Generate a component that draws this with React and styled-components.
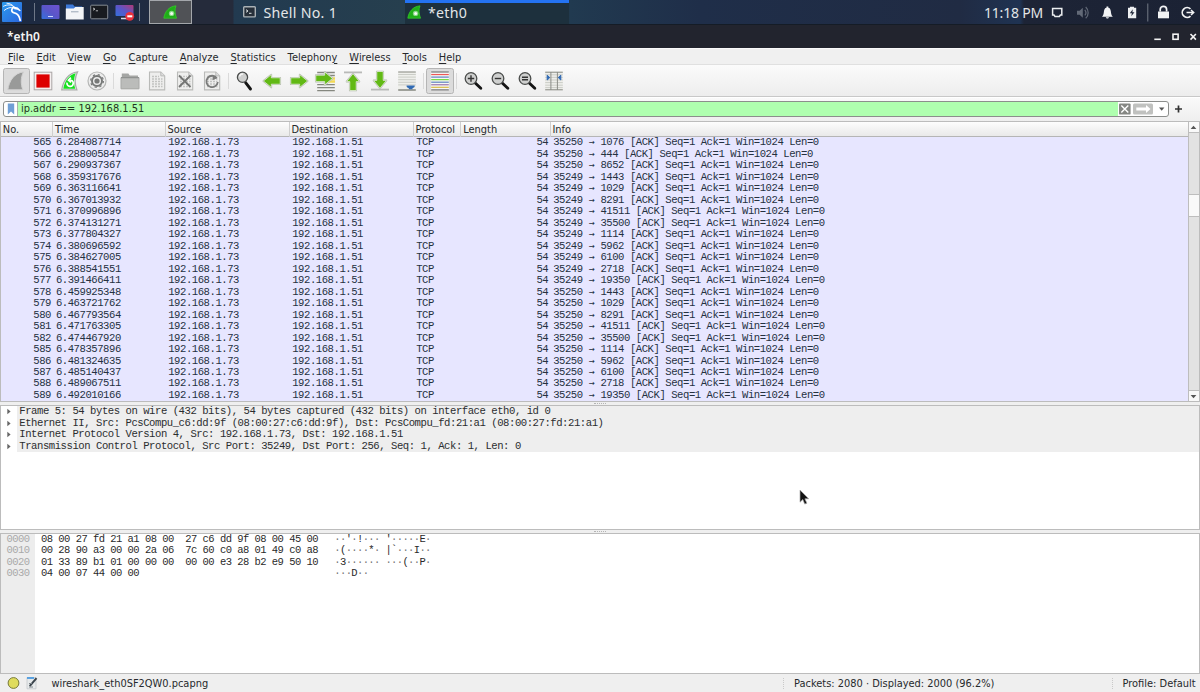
import React from "react";
import styled, { createGlobalStyle } from "styled-components";

const Global = createGlobalStyle`
  html, body { margin: 0; padding: 0; overflow: hidden; }
  body { width: 1200px; height: 692px; font-family: "DejaVu Sans", sans-serif; font-size: 9.85px; color: #26292c; }
  * { box-sizing: border-box; }
  svg { display: block; flex: none; }
`;

const Desktop = styled.div`
  width: 1200px; height: 692px; display: flex; flex-direction: column;
  background: #efefef; overflow: hidden; position: relative;
`;

/* ---------- desktop panel ---------- */
const Panel = styled.div`
  height: 25px; flex: none; display: flex; align-items: center; color: #e3e6e8;
  background: linear-gradient(90deg, #1d2a42 0, #1f2b42 140px, #252b3b 180px, #252b3b 233px, #223a50 234px, #263f4e 405px, #203845 568px, #213a50 570px, #1f2e49 700px, #202b43 960px, #1f3352 1020px, #1d2436 1024px, #1b2234 100%);
  border-bottom: 1px solid #151c26;
`;
const Launchers = styled.div`
  display: flex; align-items: center; width: 234px; height: 24px; padding-left: 2px;
`;
const LauncherGroup = styled.div`
  display: flex; align-items: center; gap: 5.2px; margin: 0 3px 0 6px;
`;
const PanelSep = styled.div`
  width: 1px; height: 18px; background: #6e7787; margin-left: ${p => p.$l || 0}px;
`;
const Pager = styled.div`
  width: 43px; height: 24px; background: #505256; border: 1px solid #a4a7ab; margin-left: 9px;
  display: flex; align-items: center; justify-content: center;
`;
const Task = styled.div`
  width: ${p => p.$w}px; height: 24px; padding-left: ${p => p.$pad}px;
  display: flex; align-items: center; gap: ${p => p.$gap}px; white-space: nowrap;
  font-family: "Noto Sans", sans-serif; font-size: 14.2px; letter-spacing: .27px;
  ${p => p.$active && "background: #1d303d; box-shadow: inset 0 3px 0 #2473f2;"}
`;
const Tray = styled.div`
  margin-left: auto; display: flex; align-items: center; height: 24px;
`;
const Clock = styled.span`
  font-family: "Noto Sans", sans-serif; font-size: 14px; margin-right: 8px; white-space: nowrap; letter-spacing: -.2px;
`;

/* ---------- window chrome ---------- */
const TitleBar = styled.div`
  height: 23px; flex: none; display: flex; align-items: center; justify-content: space-between;
  padding: 0 3px 0 7px; background: #22242e; color: #f3f3f3;
  font: 600 12px "Noto Sans", sans-serif;
`;
const MenuBar = styled.div`
  height: 17px; flex: none; display: flex; align-items: center; gap: 12px; padding: 1px 0 0 8px;
  background: #f0f0f0; border-top: 1px solid #fafafa; border-bottom: 1px solid #e0e0e0;
`;
const MenuItem = styled.span`
  white-space: nowrap;
  u { text-underline-offset: 1.5px; text-decoration-thickness: 1px; }
`;
const ToolBar = styled.div`
  height: 32px; flex: none; display: flex; align-items: center; padding-left: 2.5px;
  background: linear-gradient(#fbfbfb, #ededed); border-bottom: 1px solid #c8c8c8;
`;
const ToolButton = styled.div`
  width: 27.15px; height: 26px; display: flex; align-items: center; justify-content: center;
  border-radius: 2.5px; border: 1px solid ${p => (p.$on ? "#b5b5b5" : "transparent")};
  background: ${p => (p.$on ? "#dcdcdc" : "transparent")};
`;
const ToolSep = styled.div`
  width: 5.6px; height: 16px; display: flex; justify-content: center;
  &::after { content: ""; width: 1px; background: #dadada; }
`;
const FilterBar = styled.div`
  height: 24px; flex: none; display: flex; align-items: center; padding: 0 0 1px 3px;
  background: linear-gradient(#fafafa, #eeeeee); border-top: 1px solid #fff;
`;
const FilterField = styled.div`
  width: 1166px; height: 16px; display: flex; align-items: center; background: #fff;
  border: 1px solid #8c8e8c; border-radius: 3px; overflow: hidden;
`;
const Bookmark = styled.div`
  width: 14px; height: 14px; display: flex; align-items: center; justify-content: center; border-right: 1px solid #aab3aa;
`;
const FilterText = styled.div`
  flex: 1; height: 14px; line-height: 14px; background: #afffaf; padding-left: 3px; color: #1f3320;
`;
const FilterTools = styled.div`
  width: 50px; height: 14px; display: flex; align-items: center; padding-left: 1px;
`;

/* ---------- panes ---------- */
const Pane = styled.div`
  height: ${p => p.$h}px; flex: none; background: #fff; overflow: hidden; display: flex;
  border: 1px solid #bcbcbc;
`;
const Splitter = styled.div`
  height: 3px; flex: none; display: flex; align-items: center; justify-content: center;
  &::after { content: ""; width: 12px; border-top: 1px dotted #b4b4b4; }
`;
const Mono = styled.div`
  font-family: "Liberation Mono", monospace;
  white-space: pre;
`;
const List = styled.div`flex: 1; overflow: hidden; background: #e7e6ff;`;
const columns = "52.3px 112.3px 124px 124px 47.8px 89.2px 1fr";
const HeaderRow = styled.div`
  display: grid; grid-template-columns: ${columns}; height: 15.3px; line-height: 15px;
  background: linear-gradient(#fdfdfd, #e9e9e9); border-bottom: 1px solid #b5b5b5;
`;
const HeaderCell = styled.div`
  padding-left: 1.8px; border-right: 1px solid #cfcfcf;
  &:last-child { border-right: 0; }
`;
const PacketRow = styled(Mono)`
  display: grid; grid-template-columns: ${columns}; height: 11.49px; line-height: 11.49px;
  font-size: 10.6px; letter-spacing: -.457px; color: #25313f;
`;
const Cell = styled.span`
  padding: 0 ${p => (p.$right ? 2.3 : 0)}px 0 ${p => (p.$right ? 0 : 2.6)}px;
  text-align: ${p => (p.$right ? "right" : "left")};
`;
const ArrowGlyph = styled.span`
  display: inline-block; width: 5.9px; height: 11px; line-height: 10.5px; vertical-align: top;
  font-family: "DejaVu Sans Mono", monospace; font-size: 10px; letter-spacing: 0;
`;
const Scroll = styled.div`
  width: 11.5px; background: #e2e2e2; border-left: 1px solid #bdbdbd; display: flex; flex-direction: column;
`;
const ScrollPart = styled.div`
  height: ${p => p.$h}px; background: #f9f9f9; margin-top: ${p => p.$mt || 0};
  border: solid #bdbdbd; border-width: ${p => p.$bw || "0 0 1px"};
  display: flex; align-items: center; justify-content: center;
`;
const Tree = styled.div`flex: 1;`;
const TreeRow = styled(Mono)`
  height: 11.5px; line-height: 11.5px; display: flex; align-items: center;
  font-size: 10.6px; letter-spacing: -.457px; color: #2b2d2f;
`;
const Expander = styled.div`width: 16px; height: 100%; padding-left: 5px; display: flex; align-items: center;`;
const TreeText = styled.div`flex: 1; height: 100%; background: #eeeeee; padding-left: 2.3px;`;
const Offsets = styled(Mono)`
  width: 34px; background: #ededed; color: #a9a9a9; padding-left: 5.5px;
  font-size: 10.5px; line-height: 11.4px; letter-spacing: -.53px;
`;
const Bytes = styled(Mono)`
  padding-left: 6px; font-size: 10.5px; line-height: 11.4px; letter-spacing: -.53px; color: #2a2a2a;
`;
const Ascii = styled.span`
  margin-left: -1px; letter-spacing: -.63px;
  i { font-style: normal; color: #777; }
`;
const StatusBar = styled.div`
  height: 19px; flex: none; display: flex; align-items: center; padding-left: 7px; background: #efefef; padding-bottom: .5px;
`;
const StatusFile = styled.span`margin-left: 12.5px; flex: 1;`;
const StatusCell = styled.span`
  width: ${p => p.$w}px; border-left: 1px dotted #c9c9c9; padding-left: 10px; white-space: nowrap;
`;
const Pointer = styled.div`position: absolute; left: 799px; top: 489px;`;

/* ---------- icons ---------- */
const Ico = ({ w = 24, h = 24, children }) => (
  <svg width={w} height={h} viewBox={`0 0 ${w} ${h}`} fill="none">{children}</svg>
);

const KaliLogo = () => (
  <Ico w={20} h={20}>
    <defs><linearGradient id="kl" x1="0" y1="0" x2="1" y2="1"><stop stopColor="#2c9bee" /><stop offset="1" stopColor="#2b65dd" /></linearGradient></defs>
    <rect width="20" height="20" rx="1" fill="url(#kl)" />
    <path d="M1.2 4.4C5.5 2.2 9 2.6 12.3 5M2 8.6C5 6 8.6 5 12 5.6M4.5 1.2C8 1.4 10.5 2.8 12.3 5" stroke="#e9f4ff" strokeWidth="1" />
    <path d="M12 5.2C9 6.4 8.8 10 12.4 10.8C16.2 11.5 17.6 14 18.4 19" stroke="#fff" strokeWidth="1.7" />
    <path d="M11.5 4.6L15.8 5.4L18.8 8.4L18 9.3L15.4 7.8L12.3 7.2z" fill="#fff" />
  </Ico>
);
const Screen = ({ rec }) => (
  <Ico w={rec ? 21 : 19} h={18}>
    <defs><linearGradient id={rec ? "scr" : "scd"} x1="0" y1="1" x2="1" y2="0"><stop stopColor="#3470dc" /><stop offset=".5" stopColor="#5b55c8" /><stop offset="1" stopColor={rec ? "#b43a74" : "#6d53cf"} /></linearGradient></defs>
    <rect x=".5" y="2" width="18" height={rec ? 11 : 14} rx="1" fill={rec ? "url(#scr)" : "url(#scd)"} />
    {!rec && <path d="M7 13.5h5" stroke="#cfd9ff" />}
    {rec && <><path d="M6 15.5h6" stroke="#d8dce8" strokeWidth="1.5" /><circle cx="14.7" cy="13.3" r="4.4" fill="#e8303a" /><rect x="12.3" y="12.3" width="5" height="2" fill="#fff" /></>}
  </Ico>
);
const Files = () => (
  <Ico w={20} h={18}>
    <path d="M1 1.5h7l1.5 2H17V8H1z" fill="#3c78d8" /><path d="M.8 5.5h8l1.5-1.5h8.4V16.5H.8z" fill="#f2f4f7" /><path d="M6 8.8h7.5" stroke="#99a5b5" />
  </Ico>
);
const Terminal = ({ small }) => small ? (
  <Ico w={13} h={12}><rect x=".7" y=".7" width="11.6" height="10.2" rx=".8" fill="#27303a" stroke="#aab1b5" strokeWidth="1.4" /><path d="M3 3.7l2 1.3-2 1.3M6 7.3h2.5" stroke="#dfe4e5" /></Ico>
) : (
  <Ico w={19} h={16}><rect x=".7" y="1.2" width="17" height="13.6" rx=".8" fill="#181b20" stroke="#858b91" strokeWidth="1" /><path d="M3 4l2 1.1L3 6.2M5.8 6.8h2.2" stroke="#ddd" strokeWidth=".8" /></Ico>
);
const GreenFin = () => (
  <Ico w={15} h={14}>
    <path d="M.8 13.2C1.8 6.5 6 1.5 13 .8C11.5 4.5 11.8 9 13.6 13.2z" fill="#1fae18" stroke="#35d22a" strokeWidth=".7" />
    <circle cx="8.6" cy="8.4" r="2.7" fill="#89d886" /><circle cx="8.6" cy="8.4" r="1.5" fill="#f3fbf2" />
  </Ico>
);
const TrayIcons = () => (
  <Ico w={149} h={24}>
    <path d="M1.6 8.5h9.2v6.5h-1.4l-1 1.5H4l-1-1.5H1.6z" stroke="#eceef0" strokeWidth="1.5" />
    <g><path d="M26 10.7h2.6l3.2-3v10l-3.2-3H26z" fill="#626977" /><path d="M33.8 9.8c1.4 1.7 1.4 4 0 5.6M34.7 7c3.3 3 3.3 8.4 0 11.2" stroke="#626977" strokeWidth="1.2" /></g>
    <path d="M51 16.7c1.7-1.7 1.7-3.7 2-5.8.3-2.2 1.6-3.4 3.4-3.4s3.1 1.2 3.4 3.4c.3 2.1.3 4.1 2 5.8zM54.8 17.3h3.2c-.4 1.6-2.8 1.6-3.2 0zM55.5 6.6h1.8v2h-1.8z" fill="#f2f3f4" />
    <path d="M77 7.7h2v-1h4v1h2.2V18.3H77z" fill="#eef0f2" /><path d="M81.8 9.3l-3 4h2.1l-.7 3 3.3-4h-2.1z" fill="#1e2638" />
    <path d="M96.8 3.5v18" stroke="#747b87" />
    <path d="M107 11.5h11v6.8h-11z" fill="#f2f3f4" /><path d="M109.2 11.5V9.4c0-4 6.4-4 6.4 0v2.1" stroke="#f2f3f4" strokeWidth="1.7" />
    <path d="M139.5 8.9A4.9 4.9 0 1 0 139.5 16.1" stroke="#f2f3f4" strokeWidth="1.7" /><path d="M135.5 12.5h6.5M140 10l2.7 2.5L140 15" stroke="#f2f3f4" strokeWidth="1.5" />
  </Ico>
);
const WindowButtons = () => (
  <Ico w={44} h={16}>
    <path d="M1.3 10.3h6.5" stroke="#f3f3f3" strokeWidth="1.6" /><rect x="20" y="5.2" width="5.1" height="5.1" stroke="#f3f3f3" strokeWidth="1.6" /><path d="M37.5 5l5.4 5.6M42.9 5l-5.4 5.6" stroke="#f3f3f3" strokeWidth="1.6" />
  </Ico>
);

const finPath = "M3.8 20.8C5 11.8 10.5 3.8 19.5 2.9C16.6 8.5 16.7 15 18.8 20.8z";
const arrowPath = "M3.4 12L11.3 5.6v3.2h8.9v6.4h-8.9v3.2z";
const Arrow = ({ rot = 0, x = 0, y = 0 }) => (
  <g transform={`translate(${x} ${y}) rotate(${rot} 12 12)`} strokeLinejoin="round">
    <path d={arrowPath} fill="#f4f6f1" stroke="#b4b6b1" strokeWidth="1.7" />
    <path d={arrowPath} fill="#62b915" stroke="#eef4e6" strokeWidth=".7" />
  </g>
);
const Lines = ({ x1 = 3.2, x2 = 20.8, ys, c = "#85877f", w = 1 }) => <path d={ys.map(y => `M${x1} ${y}H${x2}`).join("")} stroke={c} strokeWidth={w} />;
const Lens = ({ children, plain }) => (
  <Ico>
    <path d={plain ? "M13.6 13.6L18.5 20" : "M14.2 14L19.8 19.3"} stroke="#151515" strokeWidth="2.9" strokeLinecap="round" />
    <circle cx={plain ? 10.5 : 10} cy={plain ? 8.3 : 9.5} r={plain ? 5.1 : 5.8} fill="#cfd0cf" stroke="#4b4d4c" strokeWidth="1.3" />
    {plain ? <path d="M7.5 7.5c.6-2 2-2.6 3.6-2.4" stroke="#f5f5f5" strokeWidth="1.5" /> : <path d={children} stroke="#343434" strokeWidth="1.4" />}
  </Ico>
);
const Doc = ({ children }) => (
  <Ico>
    <path d="M4.5 3h11.3l3.9 3.9v14H4.5z" fill="#eeeeed" stroke="#b9bab8" strokeWidth="1.1" />
    <path d="M15.8 3v3.9h3.9" fill="#ddd" stroke="#b9bab8" />
    <path d="M7 7.5h7M7 10h10.5M7 12.5h10.5M7 15h10.5M7 17.5h10.5" stroke="#c2c3c1" strokeWidth="1.3" strokeDasharray="2 1" />
    {children}
  </Ico>
);

const tools = {
  start: <Ico><path d={finPath} fill="#999a99" stroke="#d2d2d2" strokeWidth="1" /></Ico>,
  stop: <Ico><rect x="3.2" y="3.2" width="17.6" height="17.6" fill="#f5efef" stroke="#aaa6a6" /><rect x="5.4" y="5.4" width="13.2" height="13.2" fill="#dd0000" /></Ico>,
  restart: <Ico><path d={finPath} fill="#f2f7f2" stroke="#a9aca9" strokeWidth="1.3" /><path d="M5.3 19.8C6.5 12.3 10.8 5.8 17.8 4.2C15.5 9 15.7 15 17.3 19.8z" fill="#17df20" /><path d="M9 13.6c-.6 4.7 5.7 5.2 6.2.9.2-2.6-1.4-3.4-3-3.2M12.9 8.6l-2.4 2.5 2.6 2.2" stroke="#fff" strokeWidth="1.7" /></Ico>,
  options: <Ico><circle cx="12" cy="12" r="9" fill="#ededed" stroke="#b5b6b5" strokeWidth="1.2" /><circle cx="12" cy="12" r="5" stroke="#777978" strokeWidth="2" /><circle cx="12" cy="12" r="6.4" stroke="#777978" strokeWidth="1.2" strokeDasharray="2.2 2.83" /><circle cx="12" cy="12" r="2.6" fill="#777978" /></Ico>,
  open: <Ico><path d="M3.8 4.5h6.6l1.3 2H20v13H3.8z" fill="#a5a6a4" /><path d="M3 8.6h18v11.2H3z" fill="#bbbcba" stroke="#a7a8a6" /><path d="M3 8.7h18" stroke="#8b8c8a" /></Ico>,
  save: <Doc />,
  close: <Doc><path d="M6 6.5l11.5 11.5M17.5 6.5L6 18" stroke="#737473" strokeWidth="1.8" /></Doc>,
  reload: <Doc><path d="M16.8 9.2A5.7 5.7 0 1 0 17.8 13" stroke="#7a7b7a" strokeWidth="1.8" /><path d="M12.8 6.5l3.8 2.9-4.2 1.8" fill="#7a7b7a" /></Doc>,
  find: <Lens plain />,
  back: <Ico><Arrow /></Ico>,
  forward: <Ico><Arrow rot={180} /></Ico>,
  goto: <Ico><Lines ys={[3.5, 6.5, 15.7, 18.7, 21.7]} w={1.3} /><path d="M13 9.5h8M13 12.5h8" stroke="#f4da54" strokeWidth="2.6" /><Arrow rot={180} x={-2} y={-2.6} /></Ico>,
  first: <Ico><path d="M3 3.4h18" stroke="#b9bab8" strokeWidth="1.8" /><Arrow rot={90} y={1.3} /></Ico>,
  last: <Ico><path d="M3 20.6h18" stroke="#b9bab8" strokeWidth="1.8" /><Arrow rot={-90} y={-1.3} /></Ico>,
  auto: <Ico><rect x="3" y="3" width="18" height="18" fill="#eeefeb" /><Lines ys={[5.5, 8.1, 10.7, 13.3, 15.9]} c="#cbcdc7" /><Lines ys={[3]} /><Lines ys={[21]} w={1.5} /><path d="M11.5 16.5h8.3c0 2-1.2 2.2-2.3 2.7v1h-3.7v-1c-1.1-.5-2.3-.7-2.3-2.7z" fill="#316bb4" /></Ico>,
  color: <Ico><rect x="3" y="3" width="18" height="18" fill="#f7f7f5" />{["#777", "#ed5656", "#5d82bf", "#72d93b", "#5d82bf", "#9a77b0", "#d8bb46", "#777"].map((c, i) => <Lines key={i} ys={[3 + i * 2.55]} c={c} w={1.2} />)}</Ico>,
  zin: <Lens>M6.8 9.5h6.4M10 6.3v6.4</Lens>,
  zout: <Lens>M6.8 9.5h6.4</Lens>,
  z1: <Lens>M7 8.2h6M7 10.8h6</Lens>,
  resize: <Ico><rect x="3" y="3" width="18" height="18" fill="#eeeeeb" /><Lines ys={[5.8, 8.4, 11, 13.6, 16.2, 18.6]} c="#cbcdc7" /><Lines ys={[3.2, 20.8]} /><path d="M8.9 3v18M15.4 3v18" stroke="#8b8d88" /><path d="M5.2 6.2l2.6 2.4-2.6 2.4zM18.8 6.2l-2.6 2.4 2.6 2.4z" fill="#2f69b4" stroke="#2f69b4" /></Ico>,
};
const toolOrder = ["start", "stop", "restart", "options", "|", "open", "save", "close", "reload", "|", "find", "back", "forward", "goto", "first", "last", "auto", "|", "color", "|", "zin", "zout", "z1", "resize"];

const packets = [
  [565, "6.284087714", 35250, 1076], [566, "6.288005847", 35250, 444], [567, "6.290937367", 35250, 8652],
  [568, "6.359317676", 35249, 1443], [569, "6.363116641", 35249, 1029], [570, "6.367013932", 35249, 8291],
  [571, "6.370996896", 35249, 41511], [572, "6.374131271", 35249, 35500], [573, "6.377804327", 35249, 1114],
  [574, "6.380696592", 35249, 5962], [575, "6.384627005", 35249, 6100], [576, "6.388541551", 35249, 2718],
  [577, "6.391466411", 35249, 19350], [578, "6.459925348", 35250, 1443], [579, "6.463721762", 35250, 1029],
  [580, "6.467793564", 35250, 8291], [581, "6.471763305", 35250, 41511], [582, "6.474467920", 35250, 35500],
  [585, "6.478357896", 35250, 1114], [586, "6.481324635", 35250, 5962], [587, "6.485140437", 35250, 6100],
  [588, "6.489067511", 35250, 2718], [589, "6.492010166", 35250, 19350],
];
const details = [
  "Frame 5: 54 bytes on wire (432 bits), 54 bytes captured (432 bits) on interface eth0, id 0",
  "Ethernet II, Src: PcsCompu_c6:dd:9f (08:00:27:c6:dd:9f), Dst: PcsCompu_fd:21:a1 (08:00:27:fd:21:a1)",
  "Internet Protocol Version 4, Src: 192.168.1.73, Dst: 192.168.1.51",
  "Transmission Control Protocol, Src Port: 35249, Dst Port: 256, Seq: 1, Ack: 1, Len: 0",
];
const hex = [
  ["08 00 27 fd 21 a1 08 00  27 c6 dd 9f 08 00 45 00", "··'·!··· '·····E·"],
  ["00 28 90 a3 00 00 2a 06  7c 60 c0 a8 01 49 c0 a8", "·(····*· |`···I··"],
  ["01 33 89 b1 01 00 00 00  00 00 e3 28 b2 e9 50 10", "·3······ ···(··P·"],
  ["04 00 07 44 00 00", "···D··"],
];
const menus = [["", "F", "ile"], ["", "E", "dit"], ["", "V", "iew"], ["", "G", "o"], ["", "C", "apture"], ["", "A", "nalyze"], ["", "S", "tatistics"], ["Telephon", "y", ""], ["", "W", "ireless"], ["", "T", "ools"], ["", "H", "elp"]];

export default function App() {
  return (
    <Desktop>
      <Global />
      <Panel>
        <Launchers>
          <KaliLogo />
          <PanelSep $l={12} />
          <LauncherGroup><Screen /><Files /><Terminal /><Screen rec /></LauncherGroup>
          <PanelSep />
          <Pager><GreenFin /></Pager>
        </Launchers>
        <Task $w={171} $pad={9} $gap={7.5}><Terminal small /><span>Shell No. 1</span></Task>
        <Task $w={164} $pad={2} $gap={6} $active><GreenFin /><span>*eth0</span></Task>
        <Tray><Clock>11:18 PM</Clock><TrayIcons /></Tray>
      </Panel>
      <TitleBar><span>*eth0</span><WindowButtons /></TitleBar>
      <MenuBar>{menus.map(([a, u, b]) => <MenuItem key={a + u}>{a}<u>{u}</u>{b}</MenuItem>)}</MenuBar>
      <ToolBar>
        {toolOrder.map((t, i) => t === "|" ? <ToolSep key={i} /> : <ToolButton key={i} $on={t === "start" || t === "color"}>{tools[t]}</ToolButton>)}
      </ToolBar>
      <FilterBar>
        <FilterField>
          <Bookmark><Ico w={8} h={12}><path d="M.8.5h6.4v11L4 8.5.8 11.5z" fill="#6f9fd6" /></Ico></Bookmark>
          <FilterText>ip.addr == 192.168.1.51</FilterText>
          <FilterTools>
            <Ico w={49} h={14}>
              <rect x="0" y="1.4" width="11.6" height="11.2" rx="1.2" fill="#858783" /><path d="M2.3 3.5l7 7M9.3 3.5l-7 7" stroke="#fff" strokeWidth="1.4" />
              <rect x="14" y="1.4" width="20" height="11.2" rx="1.5" fill="#c0c1bf" /><path d="M17.3 5.5H27V3l4.5 4L27 11V8.5h-9.7z" fill="#fff" />
              <path d="M40 5.6h5.4l-2.7 3.2z" fill="#555" />
            </Ico>
          </FilterTools>
        </FilterField>
        <Ico w={18} h={14}><path d="M6 7h7M9.5 3.5v7" stroke="#333" strokeWidth="1.7" /></Ico>
      </FilterBar>
      <Pane $h={281}>
        <List>
          <HeaderRow>{["No.", "Time", "Source", "Destination", "Protocol", "Length", "Info"].map(h => <HeaderCell key={h}>{h}</HeaderCell>)}</HeaderRow>
          {packets.map(([n, t, s, d]) => (
            <PacketRow key={n}>
              <Cell $right>{n}</Cell><Cell>{t}</Cell><Cell>192.168.1.73</Cell><Cell>192.168.1.51</Cell><Cell>TCP</Cell><Cell $right>54</Cell>
              <Cell>{s} <ArrowGlyph>→</ArrowGlyph>{` ${d} [ACK] Seq=1 Ack=1 Win=1024 Len=0`}</Cell>
            </PacketRow>
          ))}
        </List>
        <Scroll>
          <ScrollPart $h={11}><Ico w={7} h={5}><path d="M.6 4L3.5.8 6.4 4z" fill="#555" /></Ico></ScrollPart>
          <ScrollPart $h={23} $mt="61px" $bw="1px 0" />
          <ScrollPart $h={11} $mt="auto" $bw="1px 0 0"><Ico w={7} h={5}><path d="M.6 1L3.5 4.2 6.4 1z" fill="#555" /></Ico></ScrollPart>
        </Scroll>
      </Pane>
      <Splitter />
      <Pane $h={125}>
        <Tree>
          {details.map(d => (
            <TreeRow key={d}>
              <Expander><Ico w={6} h={7}><path d="M1.3.8L4.6 3.5 1.3 6.2z" fill="#666" /></Ico></Expander>
              <TreeText>{d}</TreeText>
            </TreeRow>
          ))}
        </Tree>
      </Pane>
      <Splitter />
      <Pane $h={141}>
        <Offsets>{"0000\n0010\n0020\n0030"}</Offsets>
        <Bytes>
          {hex.map(([h, a]) => (
            <div key={h}>{h.padEnd(51, " ")}<Ascii>{[...a].map((c, i) => c === "·" ? <i key={i}>·</i> : c)}</Ascii></div>
          ))}
        </Bytes>
      </Pane>
      <StatusBar>
        <Ico w={13} h={14}><circle cx="6.5" cy="7" r="5.4" fill="#dfdc5c" stroke="#777a38" strokeWidth="1" /></Ico>
        <Ico w={19} h={14}><path d="M7 1.5h9v11.3H7z" fill="#e7eaeb" stroke="#c4c8ca" strokeWidth=".8" /><path d="M7 2h7" stroke="#4c9be0" strokeWidth="1.8" /><path d="M9.7 10.2l6.8-8" stroke="#39434b" strokeWidth="2" /><path d="M9 7.5h3M9 11h4" stroke="#7c848a" /></Ico>
        <StatusFile>wireshark_eth0SF2QW0.pcapng</StatusFile>
        <StatusCell $w={328.5}>Packets: 2080 · Displayed: 2000 (96.2%)</StatusCell>
        <StatusCell $w={88.5}>Profile: Default</StatusCell>
      </StatusBar>
      <Pointer><Ico w={12} h={17}><path d="M1 1v12.2l2.8-2.7 1.9 4.6 2.2-.9-2-4.4h3.8z" fill="#111" stroke="#aaa" strokeWidth=".7" /></Ico></Pointer>
    </Desktop>
  );
}
